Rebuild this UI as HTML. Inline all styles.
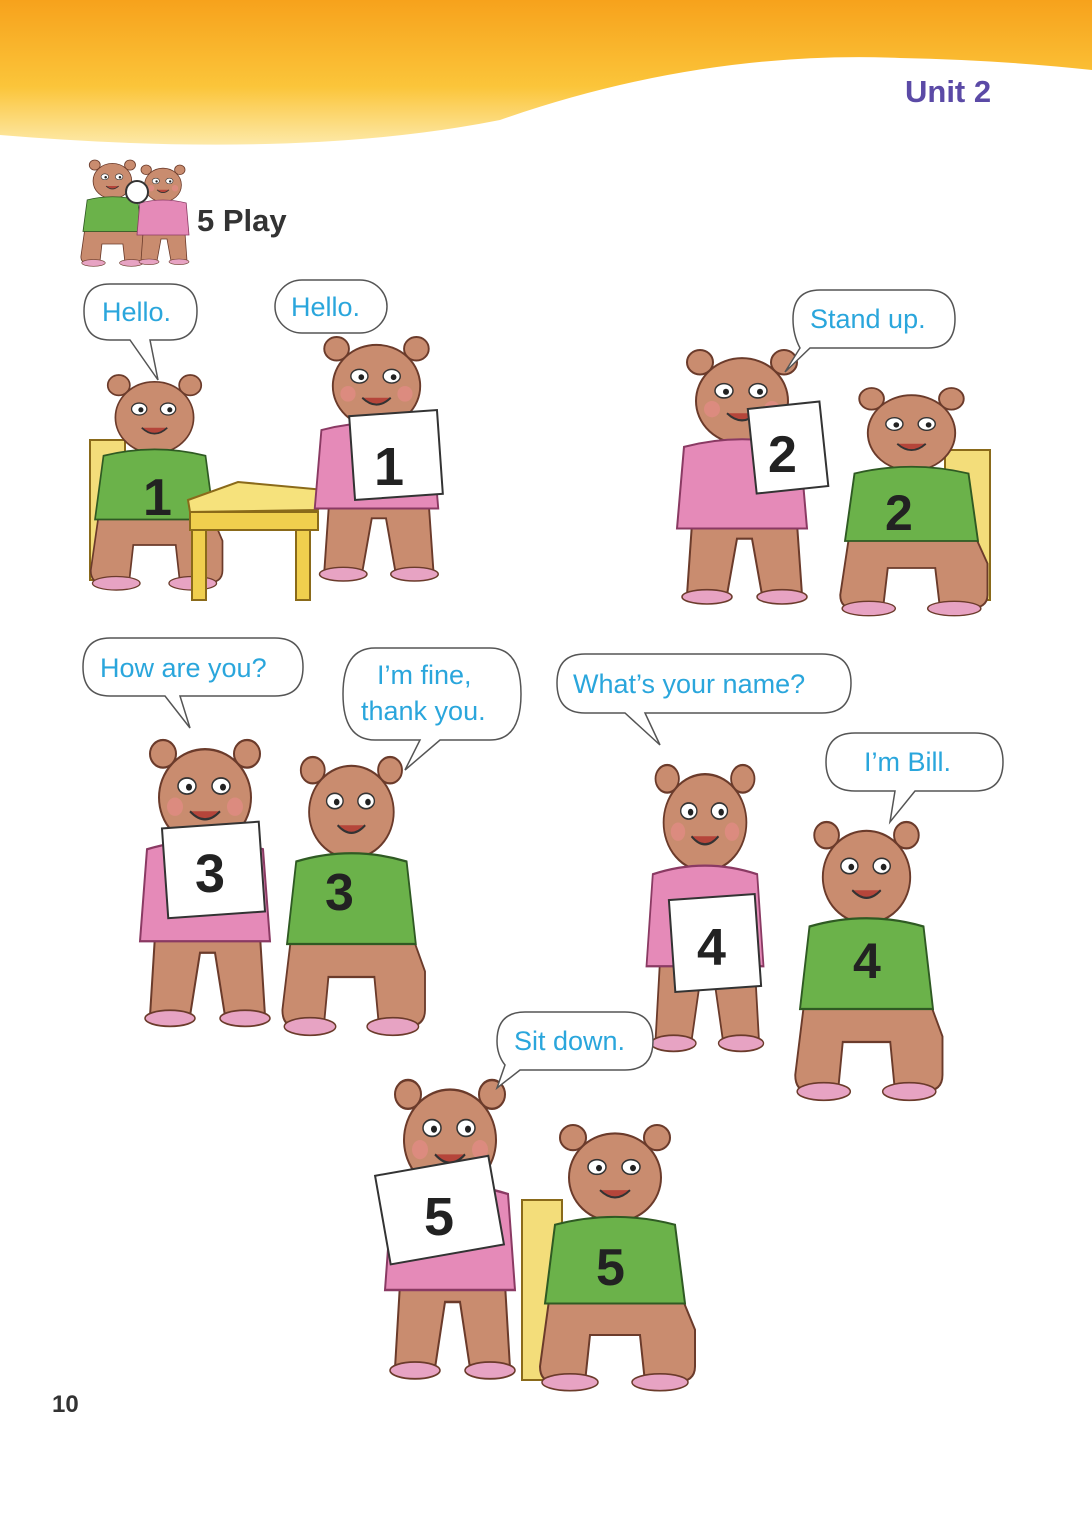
<!DOCTYPE html>
<html><head><meta charset="utf-8"><style>
html,body{margin:0;padding:0;background:#fff;}
body{width:1092px;height:1519px;overflow:hidden;position:relative;font-family:"Liberation Sans",sans-serif;}
svg{position:absolute;left:0;top:0;}
</style></head><body>
<svg width="1092" height="1519" viewBox="0 0 1092 1519" xmlns="http://www.w3.org/2000/svg">
<defs>
<linearGradient id="hd" x1="0" y1="0" x2="0" y2="1">
<stop offset="0" stop-color="#f7a21c"/><stop offset="0.6" stop-color="#fbc53a"/><stop offset="1" stop-color="#fde9a8"/>
</linearGradient>
<g id="bearG">
<ellipse cx="28" cy="12" rx="13" ry="12" fill="#c98c6f" stroke="#6b3b2b" stroke-width="2"/>
<ellipse cx="112" cy="12" rx="13" ry="12" fill="#c98c6f" stroke="#6b3b2b" stroke-width="2"/>
<ellipse cx="70" cy="50" rx="46" ry="42" fill="#c98c6f" stroke="#6b3b2b" stroke-width="2"/>
<ellipse cx="52" cy="40" rx="9" ry="7" fill="#fff" stroke="#333" stroke-width="1.5"/>
<ellipse cx="86" cy="40" rx="9" ry="7" fill="#fff" stroke="#333" stroke-width="1.5"/>
<circle cx="54" cy="41" r="3" fill="#222"/><circle cx="88" cy="41" r="3" fill="#222"/>
<path d="M55 62 Q70 76 85 62" fill="#b5453a" stroke="#333" stroke-width="2"/>
<path d="M150 195 L150 230 Q150 245 130 245 L100 245 L95 200 L45 200 L40 245 L10 245 Q-5 245 -5 230 L5 160 L135 160 Z" fill="#c98c6f" stroke="#6b3b2b" stroke-width="2"/>
<path d="M10 95 Q70 80 130 95 L140 170 L0 170 Z" fill="#6bb24a" stroke="#2f5a23" stroke-width="2"/>
<ellipse cx="25" cy="245" rx="28" ry="8" fill="#e7a3c3" stroke="#6b3b2b" stroke-width="1.5"/>
<ellipse cx="115" cy="245" rx="28" ry="8" fill="#e7a3c3" stroke="#6b3b2b" stroke-width="1.5"/>
</g>
<g id="bearP">
<ellipse cx="28" cy="12" rx="13" ry="12" fill="#c98c6f" stroke="#6b3b2b" stroke-width="2"/>
<ellipse cx="112" cy="12" rx="13" ry="12" fill="#c98c6f" stroke="#6b3b2b" stroke-width="2"/>
<ellipse cx="70" cy="50" rx="46" ry="42" fill="#c98c6f" stroke="#6b3b2b" stroke-width="2"/>
<ellipse cx="52" cy="40" rx="9" ry="7" fill="#fff" stroke="#333" stroke-width="1.5"/>
<ellipse cx="86" cy="40" rx="9" ry="7" fill="#fff" stroke="#333" stroke-width="1.5"/>
<circle cx="54" cy="41" r="3" fill="#222"/><circle cx="88" cy="41" r="3" fill="#222"/>
<circle cx="40" cy="58" r="8" fill="#e98a8a" opacity="0.6"/><circle cx="100" cy="58" r="8" fill="#e98a8a" opacity="0.6"/>
<path d="M55 62 Q70 76 85 62" fill="#b5453a" stroke="#333" stroke-width="2"/>
<path d="M20 170 L15 240 L55 240 L65 185 L80 185 L90 240 L130 240 L125 170 Z" fill="#c98c6f" stroke="#6b3b2b" stroke-width="2"/>
<path d="M12 95 Q70 80 128 95 L135 175 L5 175 Z" fill="#e58ab8" stroke="#8a3a63" stroke-width="2"/>
<ellipse cx="35" cy="242" rx="25" ry="7" fill="#e7a3c3" stroke="#6b3b2b" stroke-width="1.5"/>
<ellipse cx="110" cy="242" rx="25" ry="7" fill="#e7a3c3" stroke="#6b3b2b" stroke-width="1.5"/>
</g>
</defs>

<!-- header wave -->
<path d="M0 0 L1092 0 L1092 70 Q1000 60 900 58 Q700 50 500 120 Q300 160 0 135 Z" fill="url(#hd)"/>
<text x="905" y="102" font-size="31" font-weight="bold" fill="#5b4aa6" font-family="Liberation Sans, sans-serif">Unit 2</text>

<!-- title icon -->
<g transform="translate(83,160) scale(0.42)"><use href="#bearG"/></g>
<g transform="translate(135,165) scale(0.4)"><use href="#bearP"/></g>
<circle cx="137" cy="192" r="11" fill="#fff" stroke="#333" stroke-width="2"/>
<text x="197" y="231" font-size="31" font-weight="bold" fill="#333">5  Play</text>

<!-- scene 1 -->
<rect x="90" y="440" width="35" height="140" fill="#f3dd7a" stroke="#8a6a1a" stroke-width="2"/>
<g transform="translate(95,375) scale(0.85,0.85)"><use href="#bearG"/></g>
<text x="143" y="515" font-size="52" font-weight="bold" fill="#222">1</text>
<path d="M188 500 L238 482 L325 490 L318 510 L190 512 Z" fill="#f6e27c" stroke="#8a6a1a" stroke-width="2"/>
<rect x="190" y="512" width="128" height="18" fill="#f0cf4e" stroke="#8a6a1a" stroke-width="2"/>
<rect x="192" y="530" width="14" height="70" fill="#f0cf4e" stroke="#8a6a1a" stroke-width="2"/>
<rect x="296" y="530" width="14" height="70" fill="#f0cf4e" stroke="#8a6a1a" stroke-width="2"/>
<g transform="translate(310,337) scale(0.95,0.98)"><use href="#bearP"/></g>
<rect x="352" y="413" width="88" height="84" fill="#fff" stroke="#333" stroke-width="2" transform="rotate(-4 396 455)"/>
<text x="374" y="485" font-size="54" font-weight="bold" fill="#222">1</text>

<!-- scene 2 -->
<g transform="translate(672,350) scale(1.0,1.02)"><use href="#bearP"/></g>
<rect x="752" y="405" width="72" height="85" fill="#fff" stroke="#333" stroke-width="2" transform="rotate(-6 788 447)"/>
<text x="768" y="472" font-size="52" font-weight="bold" fill="#222">2</text>
<rect x="945" y="450" width="45" height="150" fill="#f3dd7a" stroke="#8a6a1a" stroke-width="2"/>
<g transform="translate(845,388) scale(0.95,0.9)"><use href="#bearG"/></g>
<text x="885" y="530" font-size="50" font-weight="bold" fill="#222">2</text>

<!-- scene 3 -->
<g transform="translate(135,740) scale(1.0,1.15)"><use href="#bearP"/></g>
<rect x="165" y="825" width="97" height="90" fill="#fff" stroke="#333" stroke-width="2" transform="rotate(-4 213 870)"/>
<text x="195" y="892" font-size="54" font-weight="bold" fill="#222">3</text>
<g transform="translate(287,757) scale(0.92,1.1)"><use href="#bearG"/></g>
<text x="325" y="910" font-size="52" font-weight="bold" fill="#222">3</text>

<!-- scene 4 -->
<g transform="translate(642,765) scale(0.9,1.15)"><use href="#bearP"/></g>
<rect x="672" y="897" width="86" height="92" fill="#fff" stroke="#333" stroke-width="2" transform="rotate(-4 715 943)"/>
<text x="697" y="965" font-size="52" font-weight="bold" fill="#222">4</text>
<g transform="translate(800,822) scale(0.95,1.1)"><use href="#bearG"/></g>
<text x="853" y="978" font-size="50" font-weight="bold" fill="#222">4</text>

<!-- scene 5 -->
<g transform="translate(380,1080) scale(1.0,1.2)"><use href="#bearP"/></g>
<rect x="382" y="1165" width="115" height="90" fill="#fff" stroke="#333" stroke-width="2" transform="rotate(-10 440 1210)"/>
<text x="424" y="1235" font-size="54" font-weight="bold" fill="#222">5</text>
<rect x="522" y="1200" width="40" height="180" fill="#f3dd7a" stroke="#8a6a1a" stroke-width="2"/>
<g transform="translate(545,1125) scale(1.0,1.05)"><use href="#bearG"/></g>
<text x="596" y="1285" font-size="52" font-weight="bold" fill="#222">5</text>

<!-- bubbles -->
<g fill="#fff" stroke="#555" stroke-width="1.5">
<path d="M110 284 H170 Q197 284 197 311 Q197 340 170 340 H150 L158 380 L130 340 H110 Q84 340 84 311 Q84 284 110 284Z"/>
<rect x="275" y="280" width="112" height="53" rx="27"/>
<path d="M820 290 H928 Q955 290 955 319 Q955 348 928 348 H810 L785 372 L800 348 Q793 335 793 319 Q793 290 820 290Z"/>
<path d="M110 638 H275 Q303 638 303 667 Q303 696 275 696 H180 L190 728 L165 696 H110 Q83 696 83 667 Q83 638 110 638Z"/>
<path d="M375 648 H490 Q521 648 521 694 Q521 740 490 740 H440 L405 770 L420 740 H375 Q343 740 343 694 Q343 648 375 648Z"/>
<path d="M585 654 H822 Q851 654 851 683 Q851 713 822 713 H645 L660 745 L625 713 H585 Q557 713 557 683 Q557 654 585 654Z"/>
<path d="M855 733 H975 Q1003 733 1003 762 Q1003 791 975 791 H915 L890 822 L895 791 H855 Q826 791 826 762 Q826 733 855 733Z"/>
<path d="M525 1012 H625 Q653 1012 653 1041 Q653 1070 625 1070 H520 L497 1088 L505 1065 Q497 1055 497 1041 Q497 1012 525 1012Z"/>
</g>
<g fill="#2aa6dc" font-size="27" font-family="Liberation Sans, sans-serif">
<text x="102" y="321">Hello.</text>
<text x="291" y="316">Hello.</text>
<text x="810" y="328">Stand up.</text>
<text x="100" y="677">How are you?</text>
<text x="377" y="684">I’m fine,</text>
<text x="361" y="720">thank you.</text>
<text x="573" y="693">What’s your name?</text>
<text x="864" y="771">I’m Bill.</text>
<text x="514" y="1050">Sit down.</text>
</g>

<text x="52" y="1412" font-size="24" font-weight="bold" fill="#333">10</text>
</svg>
</body></html>
